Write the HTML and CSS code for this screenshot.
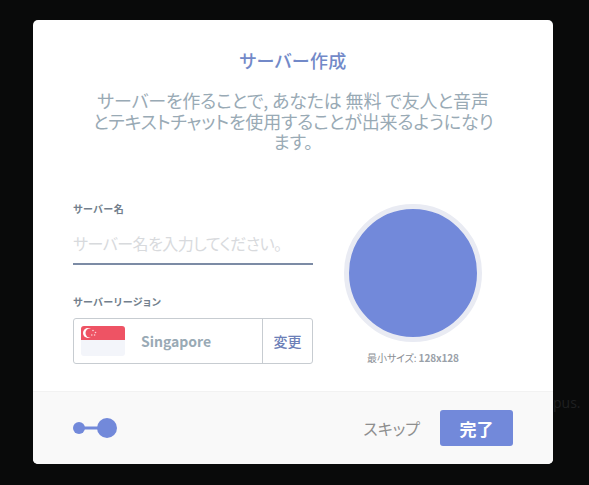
FILE: index.html
```html
<!DOCTYPE html>
<html lang="ja">
<head>
  <meta charset="UTF-8">
  <title>サーバー作成</title>
  <link rel="stylesheet" href="styles.css">
</head>
<body>
  <span class="behind-text">pus.</span>
  <div class="modal">
    <div class="modal-body">
      <h2>サーバー作成</h2>
      <p class="intro">サーバーを作ることで, あなたは 無料 で友人と音声<br>とテキストチャットを使用することが出来るようになり<br>ます。</p>
      <div class="form-row">
        <div class="fields">
          <label class="field-label">サーバー名</label>
          <div class="name-input">サーバー名を入力してください。</div>
          <label class="field-label region-label">サーバーリージョン</label>
          <div class="region">
            <div class="region-info">
              <svg class="flag" width="44" height="30" viewBox="0 0 44 30">
                <path d="M3 0H41A3 3 0 0 1 44 3V14H0V3A3 3 0 0 1 3 0Z" fill="#ee5364"/>
                <path d="M0 14H44V27A3 3 0 0 1 41 30H3A3 3 0 0 1 0 27Z" fill="#f3f5fa"/>
                <circle cx="7" cy="7" r="5" fill="#fff"/>
                <circle cx="9" cy="7" r="4.5" fill="#ee5364"/>
                <circle cx="12" cy="4.5" r="0.8" fill="#fbd5d9"/>
                <circle cx="14.5" cy="6.5" r="0.8" fill="#fbd5d9"/>
                <circle cx="13.6" cy="9" r="0.8" fill="#fbd5d9"/>
                <circle cx="10.8" cy="9" r="0.8" fill="#fbd5d9"/>
              </svg>
              <span class="region-name">Singapore</span>
            </div>
            <button class="change-btn">変更</button>
          </div>
        </div>
        <div class="avatar-col">
          <div class="avatar"></div>
          <div class="avatar-hint">最小サイズ: <strong>128x128</strong></div>
        </div>
      </div>
    </div>
    <div class="modal-footer">
      <svg class="steps" width="46" height="24" viewBox="0 0 46 24">
        <circle cx="6" cy="12" r="6" fill="#7289da"/>
        <rect x="10" y="10.5" width="20" height="3" fill="#7289da"/>
        <circle cx="34" cy="12" r="10" fill="#7289da"/>
      </svg>
      <div class="actions">
        <span class="skip">スキップ</span>
        <button class="done-btn">完了</button>
      </div>
    </div>
  </div>
</body>
</html>
```

FILE: styles.css
```css
html, body {
  height: 100%;
}

body {
  margin: 0;
  padding-top: 20px;
  box-sizing: border-box;
  overflow: hidden;
  position: relative;
  background-color: #090a0a;
  font-family: "Noto Sans CJK JP", "Noto Sans", sans-serif;
  font-feature-settings: "palt";
}

.behind-text {
  position: absolute;
  left: 553px;
  top: 393px;
  font-family: "Open Sans", sans-serif;
  font-size: 14px;
  color: #1f2021;
}

.modal {
  width: 520px;
  height: 444px;
  margin-left: 33px;
  background-color: #fff;
  border-radius: 5px;
  overflow: hidden;
  display: flex;
  flex-direction: column;
}

.modal-body {
  flex: 1;
  padding: 28px 40px 0;
}

.modal-body h2 {
  margin: 0;
  font-size: 18px;
  line-height: 24px;
  font-weight: 500;
  letter-spacing: 0.3px;
  text-align: center;
  color: #7289c8;
}

.intro {
  margin: 18px auto 0;
  width: 420px;
  font-size: 18px;
  line-height: 20.5px;
  letter-spacing: -0.15px;
  text-align: center;
  white-space: nowrap;
  color: #99aab5;
}

.form-row {
  display: flex;
  margin-top: 49px;
}

.fields {
  width: 240px;
}

.field-label {
  display: block;
  font-size: 10px;
  line-height: 16px;
  font-weight: 700;
  letter-spacing: 0.5px;
  color: #737f8d;
}

.name-input {
  margin-top: 12px;
  height: 36px;
  line-height: 28px;
  box-sizing: border-box;
  border-bottom: 2px solid #7c8ba5;
  font-size: 16px;
  letter-spacing: -0.5px;
  color: #d8dadd;
  white-space: nowrap;
}

.region-label {
  margin-top: 29px;
}

.region {
  margin-top: 8px;
  height: 46px;
  box-sizing: border-box;
  border: 1px solid #c7ccd1;
  border-radius: 3px;
  display: flex;
}

.region-info {
  flex: 1;
  display: flex;
  align-items: center;
  padding-left: 7px;
}

.flag {
  display: block;
}

.region-name {
  margin-left: 16px;
  font-size: 14px;
  font-weight: 700;
  color: #99aab5;
}

.change-btn {
  width: 50px;
  padding: 0;
  border: none;
  border-left: 1px solid #c7ccd1;
  background: none;
  font-family: inherit;
  font-size: 14px;
  font-weight: 500;
  color: #6d80b8;
}

.avatar-col {
  margin-left: 31px;
  width: 138px;
  display: flex;
  flex-direction: column;
  align-items: center;
  margin-top: 3px;
}

.avatar {
  width: 138px;
  height: 138px;
  box-sizing: border-box;
  border: 5px solid #e9ebf3;
  border-radius: 50%;
  background-color: #7289da;
}

.avatar-hint {
  margin-top: 9px;
  font-size: 10px;
  line-height: 14px;
  letter-spacing: -0.1px;
  color: #8a8e94;
  white-space: nowrap;
}

.avatar-hint strong {
  color: #99a0a8;
}

.modal-footer {
  height: 73px;
  box-sizing: border-box;
  border-top: 1px solid #f2f2f2;
  background-color: #f9f9f9;
  display: flex;
  align-items: center;
  justify-content: space-between;
  padding: 0 40px;
}

.steps {
  display: block;
}

.actions {
  display: flex;
  align-items: center;
}

.skip {
  font-size: 16px;
  color: #8e8e8e;
}

.done-btn {
  margin-left: 20px;
  width: 73px;
  height: 36px;
  padding: 0;
  border: none;
  border-radius: 3px;
  background-color: #7289da;
  font-family: inherit;
  font-size: 17px;
  font-weight: 700;
  color: #fff;
}
```
